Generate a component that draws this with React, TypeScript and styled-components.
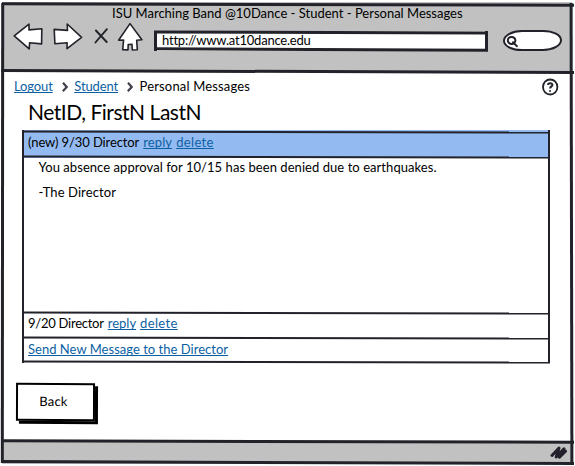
import React from 'react';
import styled, { createGlobalStyle, css } from 'styled-components';

const INK = '#22232a';
const GREY = '#c1c1c1';

const GlobalStyle = createGlobalStyle`
  * { box-sizing: border-box; }
  body {
    margin: 0;
    background: #fff;
    color: #000;
    font: 13px/16px Lato, 'Open Sans', sans-serif;
    overflow: hidden;
  }
`;

/* A slightly tilted pen stroke laid over one side of a panel. */
const Stroke = styled.i<{
  $side: 'top' | 'bottom' | 'left' | 'right';
  $at?: number;
  $weight?: number;
  $tilt?: number;
  $inset?: number;
}>`
  position: absolute;
  pointer-events: none;
  background: ${INK};
  ${({ $side, $at = 0, $weight = 2, $inset = 0 }) =>
    $side === 'top' || $side === 'bottom'
      ? css`left: ${$inset}px; right: ${$inset}px; ${$side}: ${$at}px; height: ${$weight}px;`
      : css`top: ${$inset}px; bottom: ${$inset}px; ${$side}: ${$at}px; width: ${$weight}px;`}
  transform: rotate(${({ $tilt = 0 }) => $tilt}deg);
`;

const Window = styled.main`
  position: relative;
  display: grid;
  grid-template-rows: 69px 1fr 23px;
  width: 575px;
  height: 466px;
  padding: 2px 3px 2px 2px;
`;

const Header = styled.header`
  position: relative;
  display: flex;
  flex-direction: column;
  background: ${GREY};
  padding-top: 3px;
`;

const Title = styled.div`
  position: relative;
  z-index: 1;
  padding-left: 110px;
  white-space: nowrap;
`;

const Toolbar = styled.div`
  display: flex;
  align-items: flex-start;
  padding-left: 10px;
`;

const ToolIcon = styled.svg<{ $left: number; $top: number }>`
  flex: none;
  margin: ${({ $top }) => $top}px 0 0 ${({ $left }) => $left}px;
  fill: #fff;
  stroke: ${INK};
  stroke-width: 1.6;
  stroke-linejoin: round;
  stroke-linecap: round;
  overflow: visible;
`;

const AddressBar = styled.div`
  position: relative;
  width: 334px;
  height: 20px;
  margin: 10px 0 0 11px;
  padding: 1px 0 0 8px;
  background: #fff;
  letter-spacing: -0.22px;
`;

const SearchField = styled.div`
  width: 59px;
  height: 21px;
  margin: 9px 0 0 15px;
  border: 2px solid ${INK};
  border-radius: 20px / 11px;
  background: #fff;
  display: flex;
  transform: rotate(-0.6deg);
`;

const Page = styled.section`
  position: relative;
  padding: 7px 13px 0 12px;
`;

const TopRow = styled.div`
  display: flex;
  justify-content: space-between;
  height: 21px;
`;

const Breadcrumbs = styled.nav`
  display: flex;
  align-items: flex-start;
`;

const Label = styled.span<{ $track?: number }>`
  white-space: pre;
  letter-spacing: ${({ $track = 0 }) => $track}px;
`;

const Link = styled.a<{ $track?: number }>`
  color: #0d5fa4;
  white-space: pre;
  text-decoration: underline 1px;
  text-underline-offset: 1px;
  text-decoration-skip-ink: none;
  letter-spacing: ${({ $track = 0 }) => $track}px;
`;

const Chevron = styled.svg`
  width: 6px;
  height: 10px;
  margin: 4px 6.5px 0 9px;
  fill: none;
  stroke: #42434d;
  stroke-width: 2.2;
`;

const HelpIcon = styled.svg`
  width: 18px;
  height: 18px;
  fill: none;
  stroke: #20232a;
  stroke-width: 1.8;
`;

const Heading = styled.h1`
  margin: 0 0 6px 14px;
  font-size: 21px;
  font-weight: 400;
  line-height: 25px;
  letter-spacing: -0.47px;
`;

const Accordion = styled.div`
  width: 528px;
  margin-left: 8px;
`;

const Row = styled.div<{ $height: number; $active?: boolean; $lead?: number }>`
  position: relative;
  display: flex;
  gap: 4px;
  height: ${({ $height }) => $height}px;
  padding: ${({ $lead = 3 }) => $lead}px 0 0 6px;
  background: ${({ $active }) => ($active ? '#94bbf1' : 'transparent')};
`;

const MessageBody = styled.div`
  position: relative;
  height: 154px;
  padding: 1px 0 0 16.5px;

  p { margin: 0 0 9px; }
`;

const BackButton = styled.button`
  display: block;
  width: 79px;
  height: 38px;
  margin: 20px 0 0 2px;
  padding: 0 4px 2px 0;
  border: 2px solid #000;
  background: #fff;
  box-shadow: 3px 3px 0 #000;
  color: #000;
  font: inherit;
  letter-spacing: 0.2px;
  transform: rotate(0.2deg);
`;

const StatusBar = styled.footer`
  position: relative;
  display: flex;
  justify-content: flex-end;
  background: ${GREY};
  padding: 3px 5px 0 0;
`;

const Grip = styled.svg`
  width: 17px;
  height: 16px;
  fill: none;
  stroke: #24212c;
  stroke-width: 3;
  stroke-linecap: round;
  stroke-linejoin: round;
`;

const Separator = () => (
  <Chevron viewBox="0 0 6 10">
    <path d="M1 .8 4.7 5 .8 9.2" />
  </Chevron>
);

export default function App() {
  return (
    <>
      <GlobalStyle />
      <Window>
        <Header>
          <Title>ISU Marching Band @10Dance - Student - Personal Messages</Title>
          <Toolbar>
            <ToolIcon width="30" height="27" $left={1} $top={2}>
              <path d="M1.2 12.8 16 1.2v5.7L28.8 5.7l-.2 15.2-12-1.2-.4 6.2Z" />
            </ToolIcon>
            <ToolIcon width="30" height="27" $left={10} $top={2}>
              <path d="M1.2 6.4 14.5 7.4 14.2 1 28.6 14.3 14 25.6l.1-5.8-12.2 1Z" />
            </ToolIcon>
            <ToolIcon width="14" height="16" $left={11} $top={7}>
              <path strokeWidth="1.9" d="M1.9 2.5 12.7 14M12.9 1.2 1.4 14.5" />
            </ToolIcon>
            <ToolIcon width="25" height="28" $left={10} $top={2}>
              <path d="M12 .6.6 17.2 5.6 17 4.7 26.7 10 26.9 10.2 21.5l3.8-.2.3 5.7 5-.3-.6-9.5 5.2-.4Z" />
            </ToolIcon>
            <AddressBar>
              http://www.at10dance.edu
              <Stroke $side="top" $weight={3} $tilt={0.17} />
              <Stroke $side="bottom" $weight={3} $tilt={0.25} />
              <Stroke $side="left" $weight={3} />
              <Stroke $side="right" $weight={3} />
            </AddressBar>
            <SearchField>
              <ToolIcon width="12" height="13" $left={2} $top={4}>
                <path strokeWidth="2" d="M4.8.9C2 .7.5 2.6.9 4.8s2.2 3.3 4.3 2.9 3.5-2.1 3.1-4S6.5 1 4.8.9ZM6 6l3.8 4" />
              </ToolIcon>
            </SearchField>
          </Toolbar>
        </Header>

        <Page>
          <TopRow>
            <Breadcrumbs>
              <Link $track={-0.12}>Logout</Link>
              <Separator />
              <Link $track={-0.12}>Student</Link>
              <Separator />
              <Label $track={0.16}>Personal Messages</Label>
            </Breadcrumbs>
            <HelpIcon viewBox="0 0 18 18">
              <ellipse cx="9.2" cy="9" rx="7.2" ry="7.5" />
              <path strokeWidth="2" d="M6.9 6.9C7 4.6 11.4 4.5 11.4 6.9 11.4 8.5 9.2 8.3 9.1 10.5M9 12.2v1.6" />
            </HelpIcon>
          </TopRow>
          <Heading>NetID, FirstN LastN</Heading>

          <Accordion>
            <Row $height={28} $active $lead={4}>
              <Label $track={-0.1}>(new) 9/30 Director</Label>
              <Link $track={0.1}>reply</Link>
              <Link $track={0.35}>delete</Link>
              <Stroke $side="top" $at={1} $tilt={0.1} />
              <Stroke $side="bottom" $tilt={0.1} />
              <Stroke $side="left" />
              <Stroke $side="right" />
            </Row>
            <MessageBody>
              <p><Label $track={0.055}>You absence approval for 10/15 has been denied due to earthquakes.</Label></p>
              <p><Label $track={0.1}>-The Director</Label></p>
              <Stroke $side="left" />
              <Stroke $side="right" />
            </MessageBody>
            <Row $height={25}>
              <Label $track={-0.25}>9/20 Director</Label>
              <Link>reply</Link>
              <Link $track={0.35}>delete</Link>
              <Stroke $side="top" $at={-0.5} $tilt={0.1} />
              <Stroke $side="left" />
              <Stroke $side="right" />
            </Row>
            <Row $height={26} $lead={4}>
              <Link $track={0.02}>Send New Message to the Director</Link>
              <Stroke $side="top" $at={-0.5} $tilt={0.1} />
              <Stroke $side="bottom" $tilt={0.13} />
              <Stroke $side="left" />
              <Stroke $side="right" />
            </Row>
          </Accordion>

          <BackButton>Back</BackButton>
        </Page>

        <StatusBar>
          <Grip viewBox="0 0 17 16">
            <path d="M2 11.5 9 4 6.2 13 14 4.8M9.5 13.2l6-6" />
          </Grip>
        </StatusBar>
        <Stroke $side="top" $at={2.5} $weight={3} $tilt={0.13} $inset={1.5} />
        <Stroke $side="top" $at={69.5} $weight={3} $tilt={0.22} $inset={1} />
        <Stroke $side="bottom" $at={23} $weight={3} $tilt={0.15} $inset={1.5} />
        <Stroke $side="bottom" $at={2} $weight={3} $tilt={0.18} $inset={1.5} />
        <Stroke $side="left" $at={1} $weight={3} $tilt={0.05} $inset={3} />
        <Stroke $side="right" $at={2} $weight={3} $tilt={-0.1} $inset={3} />
      </Window>
    </>
  );
}
